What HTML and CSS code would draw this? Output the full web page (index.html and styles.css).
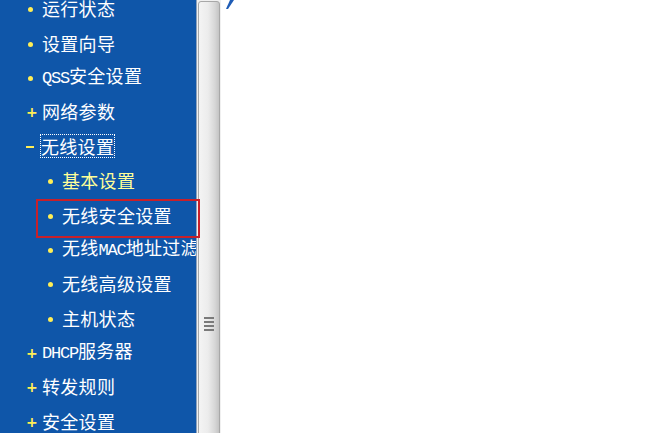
FILE: index.html
```html
<!DOCTYPE html>
<html lang="zh-CN">
<head>
    <meta charset="UTF-8">
    <title>无线安全设置</title>
    <link rel="stylesheet" href="styles.css">
</head>
<body>
    <div class="frame">
        <div class="menu_wrap">
            <ul class="menu">
                <li class="top"><span class="dot"></span><span class="txt">运行状态</span></li>
                <li class="top"><span class="dot"></span><span class="txt">设置向导</span></li>
                <li class="top"><span class="dot"></span><span class="txt"><span class="en">QSS</span>安全设置</span></li>
                <li class="top"><span class="plus">+</span><span class="txt">网络参数</span></li>
                <li class="top"><span class="minus"></span><span class="txt focus">无线设置</span></li>
                <li class="sub cur"><span class="dot"></span><span class="txt">基本设置</span></li>
                <li class="sub"><span class="dot"></span><span class="txt">无线安全设置</span></li>
                <li class="sub"><span class="dot"></span><span class="txt">无线<span class="en">MAC</span>地址过滤</span></li>
                <li class="sub"><span class="dot"></span><span class="txt">无线高级设置</span></li>
                <li class="sub"><span class="dot"></span><span class="txt">主机状态</span></li>
                <li class="top"><span class="plus">+</span><span class="txt"><span class="en">DHCP</span>服务器</span></li>
                <li class="top"><span class="plus">+</span><span class="txt">转发规则</span></li>
                <li class="top"><span class="plus">+</span><span class="txt">安全设置</span></li>
            </ul>
        </div>
        <div class="scroll">
            <div class="thumb">
                <div class="grip"><i></i><i></i><i></i><i></i></div>
            </div>
        </div>
        <div class="main">
            <svg class="mark" width="12" height="10" viewBox="0 0 12 10">
                <polygon points="7,0 11,0 5,9 3,9" fill="#1f5cb5"/>
            </svg>
        </div>
    </div>
    <div class="mark_box"></div>
</body>
</html>
```
FILE: styles.css
```css
html, body { margin:0; padding:0; background:#fff; }
body { width:650px; height:433px; overflow:hidden; position:relative; }

.frame { display:flex; height:433px; }

.menu_wrap { width:196px; flex:none; background:#0f56a9; overflow:hidden; }
.menu { list-style:none; margin:-9px 0 0 0; padding:0; width:260px;
    font-family:"Noto Sans CJK SC", sans-serif; font-size:18px; color:#fff; }
.menu li { height:34.4px; display:flex; align-items:center; white-space:nowrap; }
.menu li.top { padding-left:26px; }
.menu li.sub { padding-left:46px; }
.menu li.cur { color:#ffff99; }

.txt { letter-spacing:0.3px; line-height:22px; }
.dot { display:inline-block; width:5px; height:5px; border-radius:50%; background:#ffee55;
    margin:3px 9px 0 2px; }
.plus { display:inline-block; width:9px; margin:3px 7px 0 0; color:#ffee55; font-family:"DejaVu Sans", sans-serif;
    font-weight:bold; font-size:14px; line-height:9px; text-align:center; }
.minus { display:inline-block; width:8px; height:2px; background:#ffee55; margin:2px 7px 0 0; }
.en { font-family:"Liberation Mono", monospace; font-size:17px; letter-spacing:-1.2px; }
.focus { outline:1px dotted #fff; }

.scroll { width:25px; flex:none; background:#f0f0f0; border-left:1px solid #8fa2bb; box-sizing:border-box; }
.thumb { margin:1px 1px 0 1px; height:440px; border:1px solid #a8a8a8; border-radius:3px 3px 0 0;
    background:linear-gradient(to right, #f4f4f4 0%, #ececec 45%, #d6d6d6 80%, #c4c4c4 100%);
    box-sizing:border-box; padding-top:315px; }
.grip { width:10px; margin:0 auto 0 5px; display:flex; flex-direction:column; gap:2px; }
.grip i { display:block; height:2px; background:#7a7a7a; }

.main { flex:1; position:relative; }
.mark { position:absolute; left:2px; top:0; }

.mark_box { position:absolute; left:36px; top:199px; width:164px; height:39px;
    border:2px solid #c8202a; box-sizing:border-box; }
```
